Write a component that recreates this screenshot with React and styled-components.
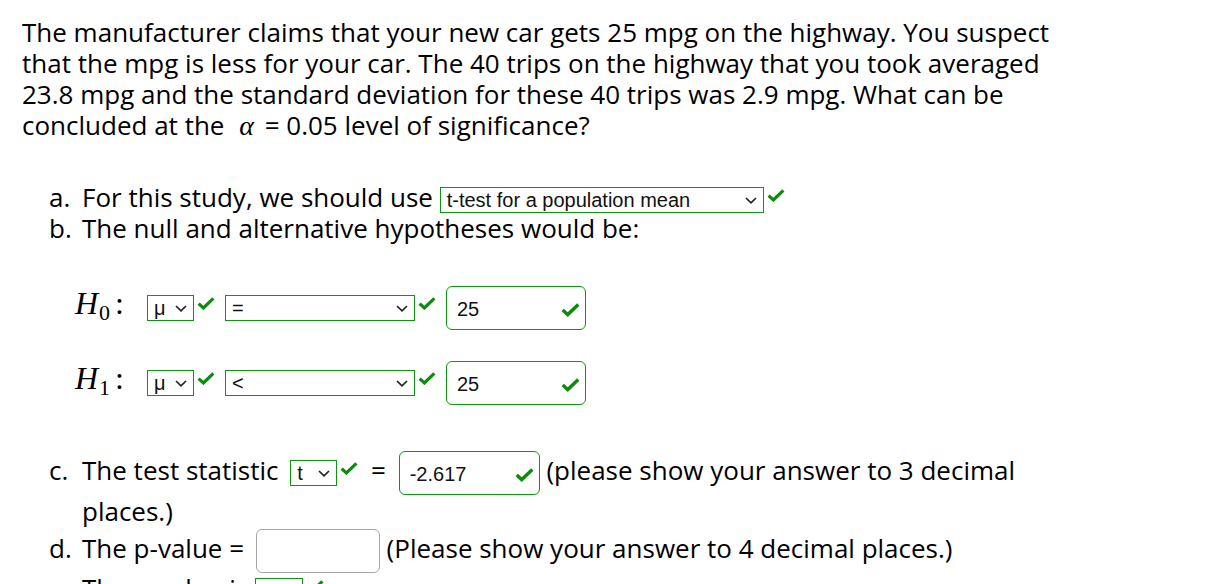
import React from "react";
import styled, { createGlobalStyle } from "styled-components";

const GlobalStyle = createGlobalStyle`
    body {
        margin: 0;
        background: #fff;
    }
`

const GREEN = "#0a990a";

const Check = ({ size = 18 }) => (
    <CheckIcon width={size} height={size * 0.72} viewBox="0 0 18 13" aria-hidden="true">
        <polyline points="1.6,6.6 6.4,11 16.4,1.4" fill="none" stroke="#0b8c0b" strokeWidth="3.2" />
    </CheckIcon>
)

const Chevron = () => (
    <svg width="12" height="7" viewBox="0 0 12 7" aria-hidden="true">
        <polyline points="1,1 6,5.8 11,1" fill="none" stroke="#222" strokeWidth="1.7" />
    </svg>
)

// fake select box with a check beside it
const Pick = ({ value, width, checked = true }) => (
    <PickWrap>
        <SelectBox $width={width}>
            <span>{value}</span>
            <Chevron />
        </SelectBox>
        {checked && <Check />}
    </PickWrap>
)

const Answer = ({ value, width, correct }) => (
    <AnswerBox $width={width} $correct={correct}>
        <span>{value}</span>
        {correct && <Check size={19} />}
    </AnswerBox>
)

const Hyp = ({ sub, relation }) => (
    <HypRow>
        <MathLabel>
            <i>H</i><sub>{sub}</sub>:
        </MathLabel>
        <Pick value="μ" width={47} />
        <Pick value={relation} width={190} />
        <Answer value="25" width={140} correct />
    </HypRow>
)

const App = () => {
    return (
        <Page>
            <GlobalStyle />
            <Question>
                The manufacturer claims that your new car gets 25 mpg on the highway. You suspect
                that the mpg is less for your car. The 40 trips on the highway that you took averaged
                23.8 mpg and the standard deviation for these 40 trips was 2.9 mpg. What can be
                concluded at the <Alpha>α</Alpha> = 0.05 level of significance?
            </Question>

            <Parts>
                <Item>
                    <Marker>a.</Marker>
                    <Body>For this study, we should use <Pick value="t-test for a population mean" width={324} /></Body>
                </Item>
                <Item>
                    <Marker>b.</Marker>
                    <Body>The null and alternative hypotheses would be:</Body>
                </Item>
            </Parts>

            <Hypotheses>
                <Hyp sub="0" relation="=" />
                <Hyp sub="1" relation="<" />
            </Hypotheses>

            <Parts>
                <Item $lh={33}>
                    <Marker>c.</Marker>
                    <Body>
                        The test statistic <Gap /><Pick value="t" width={47} /> <Eq>=</Eq> <Answer value="-2.617" width={141} correct /> (please show your answer to 3 decimal places.)
                    </Body>
                </Item>
                <Item $lh={41}>
                    <Marker>d.</Marker>
                    <Body>
                        The p-value = <Gap /><Answer value="" width={124} /> (Please show your answer to 4 decimal places.)
                    </Body>
                </Item>
                <Item>
                    <Marker>e.</Marker>
                    <Body>
                        The p-value is <Pick value="<" width={48} /> α
                    </Body>
                </Item>
            </Parts>
        </Page>
    )
}

const Page = styled.div`
    padding: 17px 0 0 22px;
    width: 1058px;
    font-family: "Open Sans", sans-serif;
    font-size: 26px;
    line-height: 31px;
    color: #000;
`

const Question = styled.p`
    margin: 0 0 41px;
`

const Alpha = styled.span`
    font-family: "Liberation Serif", serif;
    font-style: italic;
    font-size: 28px;
    margin: 0 4px 0 8px;
`

const Parts = styled.div`
    display: flex;
    flex-direction: column;
    padding-left: 27px;
`

const Item = styled.div`
    display: grid;
    grid-template-columns: 33px 1fr;
    align-items: baseline;
    line-height: ${props => props.$lh || 31}px;
`

const Marker = styled.span``

const Body = styled.span``

const Gap = styled.span`
    display: inline-block;
    width: 5px;
`

const PickWrap = styled.span`
    display: inline-flex;
    align-items: flex-start;
    vertical-align: middle;
    gap: 3px;
    line-height: normal;
`

const CheckIcon = styled.svg`
    margin-top: 2px;
    flex: none;
`

const SelectBox = styled.span`
    display: inline-flex;
    align-items: center;
    justify-content: space-between;
    box-sizing: border-box;
    width: ${props => props.$width}px;
    height: 26px;
    padding: 0 6px 0 6px;
    border: 1px solid ${GREEN};
    font-family: "Liberation Sans", Arial, sans-serif;
    font-size: 20px;
    color: #111;
    background: #fff;
`

const AnswerBox = styled.span`
    display: inline-flex;
    align-items: center;
    justify-content: space-between;
    vertical-align: middle;
    box-sizing: border-box;
    width: ${props => props.$width}px;
    height: 44px;
    padding: 2px 5px 0 10px;
    border: 1px solid ${props => props.$correct ? GREEN : "#a6a6a6"};
    border-radius: 6px;
    font-family: "Liberation Sans", Arial, sans-serif;
    font-size: 20px;
    line-height: normal;
    color: #111;
`

const Eq = styled.span`
    margin: 0 6px;
`

const Hypotheses = styled.div`
    display: flex;
    flex-direction: column;
    gap: 31px;
    margin: 42px 0 46px 53px;
`

const HypRow = styled.div`
    display: flex;
    align-items: center;
    gap: 10px;
`

const MathLabel = styled.span`
    width: 62px;
    font-family: "Liberation Serif", serif;
    font-size: 32px;

    i {
        font-style: italic;
    }
    sub {
        font-size: 22px;
        vertical-align: -6px;
        margin-left: 1px;
        margin-right: 5px;
    }
`

export default App;
